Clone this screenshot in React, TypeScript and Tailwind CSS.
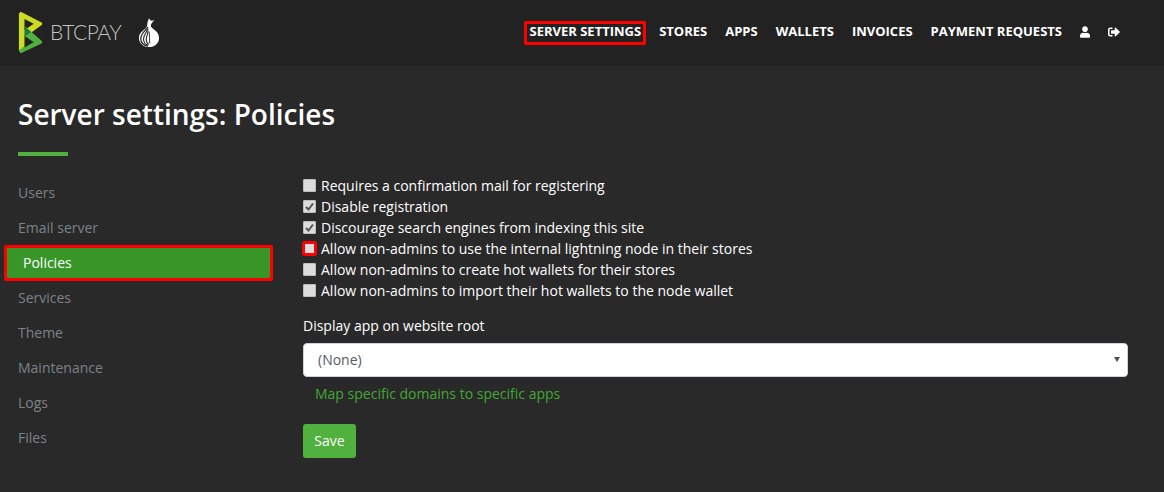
import { FaSignOutAlt, FaUser } from "react-icons/fa";

const navItems = ["STORES", "APPS", "WALLETS", "INVOICES", "PAYMENT REQUESTS"];
const sideItems = ["Users", "Email server", "Policies", "Services", "Theme", "Maintenance", "Logs", "Files"];
const policies = [
  { label: "Requires a confirmation mail for registering", checked: false, marked: false },
  { label: "Disable registration", checked: true, marked: false },
  { label: "Discourage search engines from indexing this site", checked: true, marked: false },
  { label: "Allow non-admins to use the internal lightning node in their stores", checked: false, marked: true },
  { label: "Allow non-admins to create hot wallets for their stores", checked: false, marked: false },
  { label: "Allow non-admins to import their hot wallets to the node wallet", checked: false, marked: false },
];

function Logo() {
  return (
    <svg width="25" height="45" viewBox="0 0 27 47" className="shrink-0">
      <path d="M1 3 L3 1 L26 13 L26 15 L8 28 L4 23 L17 14 L7 9 L7 38 L4 45 L1 43 Z" fill="#cedc21" />
      <path d="M8 17 L26 33 L26 35 L3 46 L1 43 L17 34 L7 27 Z" fill="#51b13e" />
      <path d="M7 17 L14 23 L7 28 Z" fill="#1e7a44" />
      <path d="M1 43 L7 38 L7 41 L3 46 Z" fill="#51b13e" />
    </svg>
  );
}

function Onion() {
  return (
    <svg width="22" height="31" viewBox="0 0 24 34" className="shrink-0">
      <path d="M12 1 C13 4 15 5 18 3 C16 6 14 7 14 10 C14 13 23 15 23 23 C23 29 18 33 12 33 C6 33 1 29 1 23 C1 15 10 14 10 9 C10 6 11 4 12 1 Z" fill="#fff" />
      <path d="M11 11 C8 15 3 18 3 24 C3 28 6 31 11 32" fill="none" stroke="#222" strokeWidth="1.4" />
      <path d="M11 13 C9 17 6 20 6 24 C6 27 8 30 11 31" fill="none" stroke="#222" strokeWidth="1.2" />
      <path d="M11 15 C11 19 9 21 9 24 C9 27 10 29 12 30" fill="none" stroke="#222" strokeWidth="1.2" />
      <path d="M12 16 C13 20 12 24 13 29" fill="none" stroke="#222" strokeWidth="1" />
    </svg>
  );
}

function Checkbox({ checked, marked }: { checked: boolean; marked: boolean }) {
  return (
    <span
      className={`flex shrink-0 items-center justify-center bg-[#dcdcdc] ${
        marked
          ? "-mx-px h-[15px] w-[15px] rounded-[3px] border-[3px] border-[#f00]"
          : "h-[13px] w-[13px] rounded-[1px] border border-[#bdbdbd]"
      }`}
    >
      {checked && (
        <svg width="9" height="9" viewBox="0 0 9 9">
          <path d="M1 5 L3.5 7.5 L8 1.5" fill="none" stroke="#555" strokeWidth="2" />
        </svg>
      )}
    </span>
  );
}

export default function App() {
  return (
    <div className="h-[492px] w-[1164px] overflow-hidden bg-[#292929] font-['Open_Sans',sans-serif] text-white">
      <header className="flex h-[66px] items-center bg-[#222] pb-[2px] pl-[18px] pr-[44px]">
        <Logo />
        <span className="ml-[7px] font-['Lato',sans-serif] text-[21px] font-light tracking-[-0.5px] text-[#c4c4c4]">
          BTCPAY
        </span>
        <span className="ml-[17px]">
          <Onion />
        </span>
        <nav className="ml-auto flex items-center gap-[18px] text-[13px] font-bold">
          <span className="-mx-[5px] mt-[2px] rounded-[2px] border-[3px] border-[#f00] px-[2px] pb-[4px] leading-[14px]">
            SERVER SETTINGS
          </span>
          {navItems.map((item) => (
            <span key={item}>{item}</span>
          ))}
          <FaUser className="h-[12px] w-[10px]" />
          <FaSignOutAlt className="h-[12px] w-[12px]" />
        </nav>
      </header>

      <main className="pt-[30px]">
        <div className="pl-[18px]">
          <h1 className="text-[28px] font-semibold leading-[36px]">Server settings: Policies</h1>
          <div className="mt-[20px] h-[4px] w-[50px] bg-[#51b13e]" />
        </div>

        <div className="mt-[19px] flex">
          <aside className="w-[303px] shrink-0 pl-[4px] text-[14px] text-[#7d8287]">
            {sideItems.map((item) =>
              item === "Policies" ? (
                <div
                  key={item}
                  className="flex h-[36px] w-[269px] -my-[0.5px] items-center rounded-[2px] border-[3px] border-[#f00] bg-[#389628] pl-[16px] text-white"
                >
                  {item}
                </div>
              ) : (
                <div key={item} className="flex h-[35px] items-center pl-[14px]">
                  {item}
                </div>
              ),
            )}
          </aside>

          <section className="w-[825px] text-[14px]">
            <div className="flex flex-col">
              {policies.map((p) => (
                <label key={p.label} className="flex h-[21px] items-center gap-[5px]">
                  <Checkbox checked={p.checked} marked={p.marked} />
                  {p.label}
                </label>
              ))}
            </div>
            <p className="mt-[14px] leading-[21px]">Display app on website root</p>
            <div className="mt-[7px] flex h-[34px] items-center rounded-[4px] border border-[#ced4da] bg-white pb-[1px] pl-[14px] text-[#555c63]">
              (None)
              <span className="ml-auto mr-[7px] h-0 w-0 border-x-[3px] border-t-[5px] border-x-transparent border-t-[#4a4f55]" />
            </div>
            <a className="ml-[12px] mt-[6px] block leading-[21px] text-[#41a833]">
              Map specific domains to specific apps
            </a>
            <button className="mt-[20px] flex h-[34px] w-[53px] items-center justify-center rounded-[3px] bg-[#51b13e] pb-[2px] text-white">
              Save
            </button>
          </section>
        </div>
      </main>
    </div>
  );
}
